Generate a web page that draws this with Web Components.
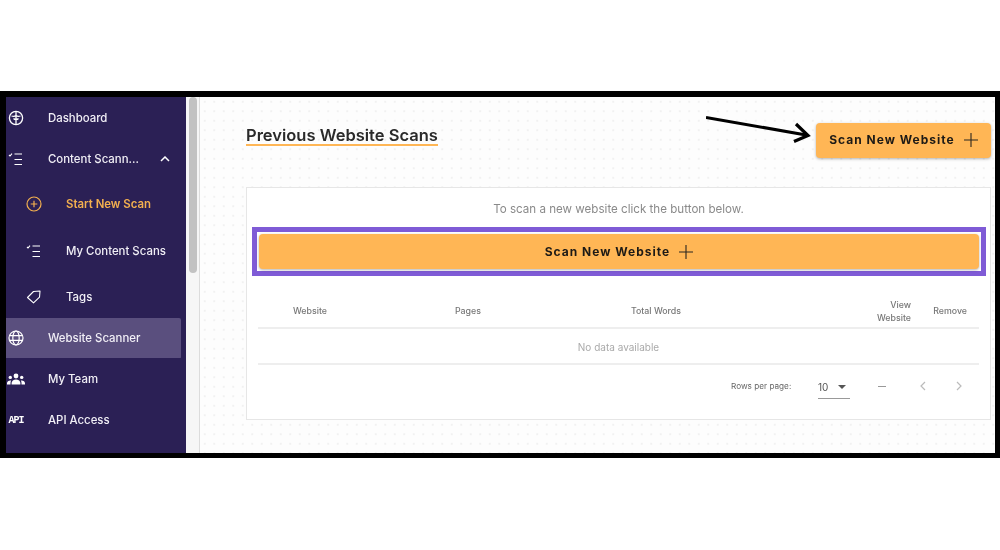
<!DOCTYPE html>
<html>
<head>
<meta charset="utf-8">
<title>Website Scans</title>
<style>
  html, body { margin: 0; padding: 0; background: #fff; }
  body { font-family: "Inter", "Liberation Sans", sans-serif; height: 550px; overflow: hidden; padding-top: 91px; box-sizing: border-box; }
</style>
</head>
<body>
<app-frame>
  <side-bar slot="side"></side-bar>
  <scans-page slot="main"></scans-page>
</app-frame>

<script>
const ICONS = {
  dashboard: `<svg width="16" height="16" viewBox="0 0 16 16" fill="none" stroke="#fff" stroke-width="1.3"><circle cx="8" cy="8" r="6.6"/><path d="M8 1.5v13M8 5.500c-1 1-3 1-4.500.5M8 5.500c1 1 3 1 4.500.5M5.500 8.500c.7.8 1.600 1 2.500 1s1.800-.2 2.500-1"/></svg>`,
  checklist: `<svg width="16" height="14" viewBox="0 0 16 14" fill="none" stroke="#fff" stroke-width="1.1"><path d="M1 3l1 1 2-2.400"/><path d="M6.500 2h7.500M6.500 7.500h7.500M6.500 12.500h7.500"/></svg>`,
  plus: `<svg width="16" height="16" viewBox="0 0 16 16" fill="none" stroke="#f4b04f" stroke-width="1.2"><circle cx="8" cy="8" r="7"/><path d="M8 4.700v6.600M4.700 8h6.600"/></svg>`,
  tag: `<svg width="16" height="14" viewBox="0 0 16 14" fill="none" stroke="#fff" stroke-width="1.1" stroke-linejoin="round"><path d="M1.500 7.500L7.500 1.500 14 1l-.5 6.200-6 5.600z"/></svg>`,
  globe: `<svg width="16" height="16" viewBox="0 0 16 16" fill="none" stroke="#fff" stroke-width="1.2"><circle cx="8" cy="8" r="7"/><ellipse cx="8" cy="8" rx="3.200" ry="7"/><path d="M1.300 5.600h13.400M1.300 10.400h13.400"/></svg>`,
  team: `<svg width="18" height="12" viewBox="0 0 18 12" fill="#fff"><circle cx="9" cy="3" r="2.400"/><circle cx="3.300" cy="4.400" r="1.700"/><circle cx="14.700" cy="4.400" r="1.700"/><path d="M4.600 11.500V10c0-2 2-3.600 4.400-3.600s4.400 1.600 4.400 3.600v1.500z"/><path d="M0 11.500v-1.200C0 8.800 1.500 7.500 3.400 7.500c.3 0 .5 0 .8.1-.5.7-.7 1.500-.7 2.400v1.500zM18 11.500v-1.200c0-1.500-1.500-2.800-3.400-2.800-.3 0-.5 0-.8.1.5.7.7 1.500.7 2.400v1.500z"/></svg>`,
  partial: `<svg width="16" height="16" viewBox="0 0 16 16" fill="none" stroke="#fff" stroke-width="1.3"><circle cx="8" cy="8" r="6.600"/></svg>`
};

class AppFrame extends HTMLElement {
  constructor() {
    super();
    this.attachShadow({ mode: "open" }).innerHTML = `
      <style>
        :host { display: flex; height: 367px; border: solid #000; border-width: 6px 5px 5px 6px; box-sizing: border-box; background: #fdfdfd; overflow: hidden; }
        .bar { width: 14px; flex: none; background: #f6f6f6; border-right: 1px solid #dcdcdc; box-sizing: border-box; padding-left: 3px; filter: blur(.4px); }
        .thumb { height: 176px; width: 8px; background: #c2c2c2; border-radius: 4px; }
      </style>
      <slot name="side"></slot>
      <div class="bar"><div class="thumb"></div></div>
      <slot name="main"></slot>`;
  }
}

class NavItem extends HTMLElement {
  constructor() {
    super();
    this.attachShadow({ mode: "open" }).innerHTML = `
      <style>
        :host { display: flex; align-items: center; height: 41px; color: #f1eff6; font-size: 11.4px; font-weight: 500; }
        :host([sub]) .icon { margin-left: 18px; }
        :host([current]) { color: #f4b04f; font-weight: 600; }
        :host([selected]) { background: linear-gradient(#5a4f7e 40px, transparent 40px); border-radius: 0 2px 2px 0; width: 175px; }
        .icon { width: 20px; flex: none; display: flex; justify-content: center; margin-right: 22px; }
        ::slotted(svg) { display: block; }
        .label { white-space: nowrap; }
      </style>
      <span class="icon"><slot name="icon"></slot></span>
      <span class="label"><slot></slot></span>
      <slot name="after"></slot>`;
  }
}

class SideBar extends HTMLElement {
  constructor() {
    super();
    this.attachShadow({ mode: "open" }).innerHTML = `
      <style>
        :host { display: block; width: 180px; flex: none; background: #2b2055; overflow: hidden; filter: blur(.4px); }
        .sub { display: flex; flex-direction: column; gap: 5.5px; margin-top: 4.5px; }
        .api { font: bold 10px "Liberation Mono", monospace; letter-spacing: -1px; color: #fff; }
        .chev { margin-left: 21px; }
      </style>
      <nav-item>${ICONS.dashboard.replace("<svg", '<svg slot="icon"')}Dashboard</nav-item>
      <nav-item>${ICONS.checklist.replace("<svg", '<svg slot="icon"')}Content Scann...
        <svg slot="after" class="chev" width="10" height="6" viewBox="0 0 10 6" fill="none" stroke="#fff" stroke-width="1.5"><path d="M1 5l4-4 4 4"/></svg>
      </nav-item>
      <div class="sub">
        <nav-item sub current>${ICONS.plus.replace("<svg", '<svg slot="icon"')}Start New Scan</nav-item>
        <nav-item sub>${ICONS.checklist.replace("<svg", '<svg slot="icon"')}My Content Scans</nav-item>
        <nav-item sub>${ICONS.tag.replace("<svg", '<svg slot="icon"')}Tags</nav-item>
      </div>
      <nav-item selected>${ICONS.globe.replace("<svg", '<svg slot="icon"')}Website Scanner</nav-item>
      <nav-item>${ICONS.team.replace("<svg", '<svg slot="icon"')}My Team</nav-item>
      <nav-item><span slot="icon" class="api">API</span>API Access</nav-item>
      <nav-item>${ICONS.partial.replace("<svg", '<svg slot="icon"')}</nav-item>`;
  }
}

class ScanButton extends HTMLElement {
  constructor() {
    super();
    this.attachShadow({ mode: "open" }).innerHTML = `
      <style>
        :host { display: flex; align-items: center; justify-content: center; gap: 9px; background: #ffb655; border-radius: 4px; color: #1d1a16; font-size: 12px; font-weight: 700; letter-spacing: 1px; white-space: nowrap; box-shadow: 0 1px 3px rgba(0,0,0,.3); box-sizing: border-box; }
        svg { display: block; flex: none; }
      </style>
      <span><slot></slot></span>
      <svg width="14" height="14" viewBox="0 0 14 14" fill="none" stroke="#2a2620" stroke-width="1.1"><path d="M7 0v14M0 7h14"/></svg>`;
  }
}

class DataTable extends HTMLElement {
  constructor() {
    super();
    this.attachShadow({ mode: "open" }).innerHTML = `
      <style>
        :host { display: block; margin: 0 11px; font-size: 8.8px; color: #777; }
        .head { display: grid; grid-template-columns: 104px 212px 164px 1fr 68px; align-items: center; padding-top: 17px; height: 53px; box-sizing: border-box; border-bottom: 2px solid #eee; font-weight: 500; text-align: center; }
        .view { justify-self: end; text-align: right; line-height: 13px; padding-top: 1px; }
        .rem { justify-self: end; padding-right: 12px; }
        .empty { height: 36px; box-sizing: border-box; padding-top: 1px; display: flex; align-items: center; justify-content: center; border-bottom: 2px solid #eee; color: #aaa; font-size: 10px; }
        .foot { display: flex; align-items: center; height: 42px; color: #666; padding-left: 473px; }
        .rows { width: 61px; font-size: 8.2px; white-space: nowrap; }
        .sel { width: 32px; margin-left: 26px; height: 24px; box-sizing: border-box; border-bottom: 1px solid #999; display: flex; align-items: center; gap: 10px; font-size: 10px; color: #555; margin-top: 2px; }
        .dash { margin-left: 28px; width: 8px; height: 1px; background: #999; }
        .prev { margin-left: 34px; }
        .next { margin-left: 30px; }
      </style>
      <div class="head">
        <span>Website</span><span>Pages</span><span>Total Words</span>
        <span class="view">View<br>Website</span><span class="rem">Remove</span>
      </div>
      <div class="empty">No data available</div>
      <div class="foot">
        <span class="rows">Rows per page:</span>
        <div class="sel"><span>10</span><svg width="8" height="4" viewBox="0 0 8 4" fill="#555"><path d="M0 0h8L4 4z"/></svg></div>
        <span class="dash"></span>
        <svg class="prev" width="6" height="10" viewBox="0 0 6 10" fill="none" stroke="#bbb" stroke-width="1.2"><path d="M5 1L1 5l4 4"/></svg>
        <svg class="next" width="6" height="10" viewBox="0 0 6 10" fill="none" stroke="#bbb" stroke-width="1.2"><path d="M1 1l4 4-4 4"/></svg>
      </div>`;
  }
}

class ScansPage extends HTMLElement {
  constructor() {
    super();
    this.attachShadow({ mode: "open" }).innerHTML = `
      <style>
        :host { display: block; flex: 1; min-width: 0; position: relative; box-sizing: border-box; padding: 26px 4px 0 46px; filter: blur(.4px);
          background-color: #fdfdfd; background-image: radial-gradient(#f1f1f1 0.7px, transparent 0.8px); background-size: 9.5px 9.5px; }
        .top { display: flex; justify-content: space-between; align-items: flex-start; height: 35px; }
        h1 { margin: 0; font-size: 16.5px; font-weight: 600; color: #2a2a2a; line-height: 18px; border-bottom: 2px solid #ffb655; transform: translateY(3px); }
        .big { width: 175px; height: 35px; padding-bottom: 2px; }
        .card { margin-top: 29px; height: 233px; box-sizing: border-box; border: 1px solid #e6e6e6; background: #fff; }
        .hint { text-align: center; font-size: 11.6px; color: #8a8a8a; line-height: 18px; margin-top: 12px; }
        .focus { margin: 9px 4px 0 5px; height: 49px; box-sizing: border-box; border: 5px solid #7f5bd6; padding: 2px; background: #fff; }
        .focus scan-button { height: 100%; }
        .arrow { position: absolute; left: 506px; top: 18px; }
      </style>
      <div class="top">
        <h1>Previous Website Scans</h1>
        <scan-button class="big">Scan New Website</scan-button>
      </div>
      <svg class="arrow" width="106" height="34" viewBox="0 0 106 34" fill="none" stroke="#000" stroke-width="3.2"><path d="M0 2.500L100 20"/><path d="M90 9l12 11.500-14 6"/></svg>
      <div class="card">
        <div class="hint">To scan a new website click the button below.</div>
        <div class="focus"><scan-button>Scan New Website</scan-button></div>
        <data-table></data-table>
      </div>`;
  }
}

customElements.define("app-frame", AppFrame);
customElements.define("nav-item", NavItem);
customElements.define("side-bar", SideBar);
customElements.define("scan-button", ScanButton);
customElements.define("data-table", DataTable);
customElements.define("scans-page", ScansPage);
</script>
</body>
</html>
